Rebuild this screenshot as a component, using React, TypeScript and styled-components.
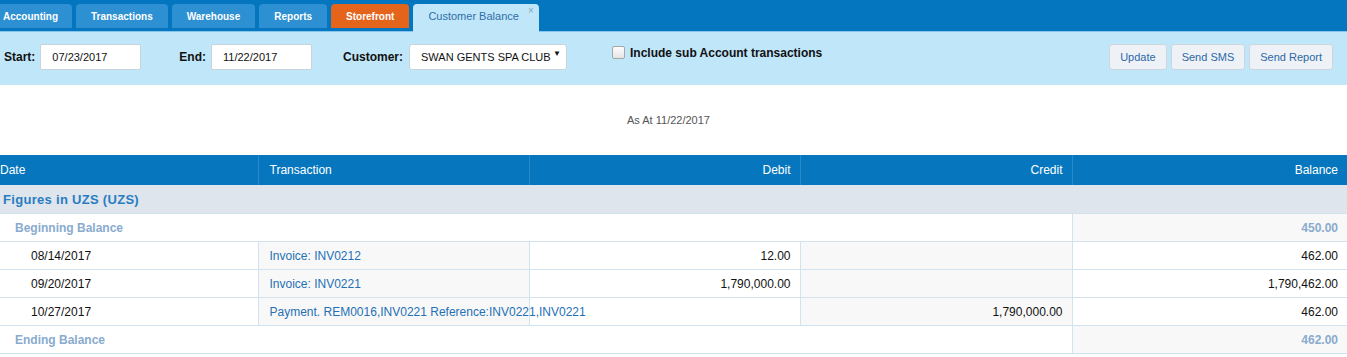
import styled, { createGlobalStyle } from 'styled-components';

const GlobalStyle = createGlobalStyle`
    html, body {
        margin: 0;
        padding: 0;
        background: #ffffff;
        font-family: "Liberation Sans", Arial, sans-serif;
        font-size: 12px;
        overflow: hidden;
    }
`

const TabBar = styled.div`
    display: flex;
    align-items: flex-start;
    gap: 4px;
    height: 32px;
    padding-top: 4px;
    box-sizing: border-box;
    background: #0476c0;
    border-bottom: 1px solid #86c6ee;
`

const Tab = styled.div<{ $variant?: 'default' | 'orange' | 'active'; $first?: boolean }>`
    position: relative;
    display: flex;
    align-items: center;
    height: ${p => (p.$variant === 'active' ? '28px' : '24px')};
    padding: ${p => (p.$first ? '0 14px 0 3px' : p.$variant === 'active' ? '0 20px 0 15px' : '0 15px')};
    border-radius: ${p => (p.$first ? '0 4px 0 0' : '4px 4px 0 0')};
    box-sizing: border-box;
    font-size: ${p => (p.$variant === 'active' ? '11px' : '10px')};
    font-weight: ${p => (p.$variant === 'active' ? 'normal' : 'bold')};
    color: ${p => (p.$variant === 'active' ? '#2f6ea6' : '#ffffff')};
    background: ${p =>
        p.$variant === 'orange' ? '#e5641c' : p.$variant === 'active' ? '#c0e6f9' : '#2d90d2'};
`

const TabLabel = styled.span<{ $lift?: boolean }>`
    margin-top: ${p => (p.$lift ? '-4px' : '0')};
`

const CloseMark = styled.span`
    position: absolute;
    top: 2px;
    right: 5px;
    font-size: 10px;
    line-height: 10px;
    color: #8aa6bf;
`

const Toolbar = styled.div`
    display: flex;
    align-items: flex-start;
    height: 53px;
    padding: 12px 14px 0 4px;
    box-sizing: border-box;
    background: #c0e6f9;
`

const FieldLabel = styled.label<{ $gap: number }>`
    display: flex;
    align-items: center;
    height: 25px;
    margin-left: ${p => p.$gap}px;
    margin-right: 5px;
    font-weight: bold;
    color: #111;
`

const DateBox = styled.div`
    display: flex;
    align-items: center;
    width: 101px;
    height: 26px;
    padding-left: 11px;
    box-sizing: border-box;
    background: #ffffff;
    border: 1px solid #c9d3da;
    border-radius: 2px;
    font-size: 11px;
    color: #111;
`

const SelectBox = styled.div`
    position: relative;
    display: flex;
    align-items: center;
    width: 158px;
    height: 26px;
    margin-left: 1px;
    padding-left: 11px;
    box-sizing: border-box;
    background: #ffffff;
    border: 1px solid #c9d3da;
    border-radius: 3px;
    font-size: 11px;
    color: #111;
`

const Arrow = styled.span`
    position: absolute;
    right: 5px;
    top: 4px;
    font-size: 8px;
    color: #111;
`

const CheckWrap = styled.div`
    display: flex;
    align-items: flex-start;
    gap: 5px;
    margin-left: 45px;
    padding-top: 2px;
    font-weight: bold;
    color: #111;
    line-height: 14px;
`

const CheckBox = styled.span`
    display: inline-block;
    width: 11px;
    height: 11px;
    border: 1px solid #a7a7a7;
    border-radius: 2px;
    background: linear-gradient(#fdfdfd, #e4e4e4);
`

const Spacer = styled.div`
    flex: 1;
`

const ButtonGroup = styled.div`
    display: flex;
    gap: 4px;
`

const ActionButton = styled.button`
    height: 26px;
    padding: 0 10px;
    background: #eef2f6;
    border: 1px solid #cdd6de;
    border-radius: 3px;
    font-family: "Liberation Sans", Arial, sans-serif;
    font-size: 11px;
    color: #2c68a8;
`

const AsAt = styled.div`
    height: 70px;
    display: flex;
    align-items: center;
    justify-content: center;
    padding-right: 10px;
    font-size: 11px;
    color: #555;
`

const Table = styled.table`
    width: 100%;
    border-collapse: collapse;
    table-layout: fixed;
`

const HeadCell = styled.th<{ $align?: 'left' | 'right'; $pad?: number }>`
    height: 30px;
    padding: 0 ${p => (p.$align === 'right' ? 9 : 0)}px 0 ${p => p.$pad ?? 0}px;
    background: #0677be;
    color: #ffffff;
    font-weight: normal;
    font-size: 12px;
    text-align: ${p => p.$align ?? 'left'};
    border-left: 1px solid #2a89c8;
    &:first-child {
        border-left: none;
    }
`

const GroupCell = styled.td`
    height: 28px;
    padding: 0 0 0 3px;
    background: #dfe5ed;
    color: #2a7cc1;
    font-weight: bold;
    font-size: 13px;
    letter-spacing: 0.3px;
    border-bottom: 1px solid #d3e2ef;
`

const SummaryLabel = styled.td`
    height: 27px;
    padding: 0 0 0 15px;
    color: #89abcf;
    font-weight: bold;
    font-size: 12px;
    border-bottom: 1px solid #d3e2ef;
`

const Cell = styled.td<{ $align?: 'left' | 'right'; $shade?: boolean; $link?: boolean; $summary?: boolean; $pad?: number }>`
    height: 27px;
    padding: ${p => (p.$align === 'right' ? '0 9px 0 0' : `0 0 0 ${p.$pad ?? 11}px`)};
    text-align: ${p => p.$align ?? 'left'};
    background: ${p => (p.$shade ? '#f8f8f8' : '#ffffff')};
    color: ${p => (p.$summary ? '#89abcf' : p.$link ? '#2470b5' : '#111')};
    font-weight: ${p => (p.$summary ? 'bold' : 'normal')};
    font-size: 12px;
    border-bottom: 1px solid #d3e2ef;
    border-left: 1px solid #d3e2ef;
    white-space: nowrap;
    &:first-child {
        border-left: none;
    }
`

interface Entry {
    date: string
    transaction: string
    debit: string
    credit: string
    balance: string
}

const entries: Entry[] = [
    { date: '08/14/2017', transaction: 'Invoice: INV0212', debit: '12.00', credit: '', balance: '462.00' },
    { date: '09/20/2017', transaction: 'Invoice: INV0221', debit: '1,790,000.00', credit: '', balance: '1,790,462.00' },
    { date: '10/27/2017', transaction: 'Payment. REM0016,INV0221 Reference:INV0221,INV0221', debit: '', credit: '1,790,000.00', balance: '462.00' },
]

const tabs = ['Accounting', 'Transactions', 'Warehouse', 'Reports']

const App = () => {
    return (
        <>
            <GlobalStyle />
            <TabBar>
                {tabs.map((t, i) => (
                    <Tab key={t} $first={i === 0}>{t}</Tab>
                ))}
                <Tab $variant="orange">Storefront</Tab>
                <Tab $variant="active">
                    <TabLabel $lift>Customer Balance</TabLabel>
                    <CloseMark>×</CloseMark>
                </Tab>
            </TabBar>
            <Toolbar>
                <FieldLabel $gap={0}>Start:</FieldLabel>
                <DateBox>07/23/2017</DateBox>
                <FieldLabel $gap={38}>End:</FieldLabel>
                <DateBox>11/22/2017</DateBox>
                <FieldLabel $gap={31}>Customer:</FieldLabel>
                <SelectBox>
                    SWAN GENTS SPA CLUB
                    <Arrow>▼</Arrow>
                </SelectBox>
                <CheckWrap>
                    <CheckBox />
                    Include sub Account transactions
                </CheckWrap>
                <Spacer />
                <ButtonGroup>
                    <ActionButton>Update</ActionButton>
                    <ActionButton>Send SMS</ActionButton>
                    <ActionButton>Send Report</ActionButton>
                </ButtonGroup>
            </Toolbar>
            <AsAt>As At 11/22/2017</AsAt>
            <Table>
                <colgroup>
                    <col style={{ width: 258 }} />
                    <col style={{ width: 271 }} />
                    <col style={{ width: 271 }} />
                    <col style={{ width: 272 }} />
                    <col />
                </colgroup>
                <thead>
                    <tr>
                        <HeadCell>Date</HeadCell>
                        <HeadCell $pad={11}>Transaction</HeadCell>
                        <HeadCell $align="right">Debit</HeadCell>
                        <HeadCell $align="right">Credit</HeadCell>
                        <HeadCell $align="right">Balance</HeadCell>
                    </tr>
                </thead>
                <tbody>
                    <tr>
                        <GroupCell colSpan={5}>Figures in UZS (UZS)</GroupCell>
                    </tr>
                    <tr>
                        <SummaryLabel colSpan={4}>Beginning Balance</SummaryLabel>
                        <Cell $align="right" $shade $summary>450.00</Cell>
                    </tr>
                    {entries.map(e => (
                        <tr key={e.date}>
                            <Cell $pad={31}>{e.date}</Cell>
                            <Cell $shade $link>{e.transaction}</Cell>
                            <Cell $align="right">{e.debit}</Cell>
                            <Cell $align="right" $shade>{e.credit}</Cell>
                            <Cell $align="right">{e.balance}</Cell>
                        </tr>
                    ))}
                    <tr>
                        <SummaryLabel colSpan={4}>Ending Balance</SummaryLabel>
                        <Cell $align="right" $shade $summary>462.00</Cell>
                    </tr>
                </tbody>
            </Table>
        </>
    )
}

export default App
